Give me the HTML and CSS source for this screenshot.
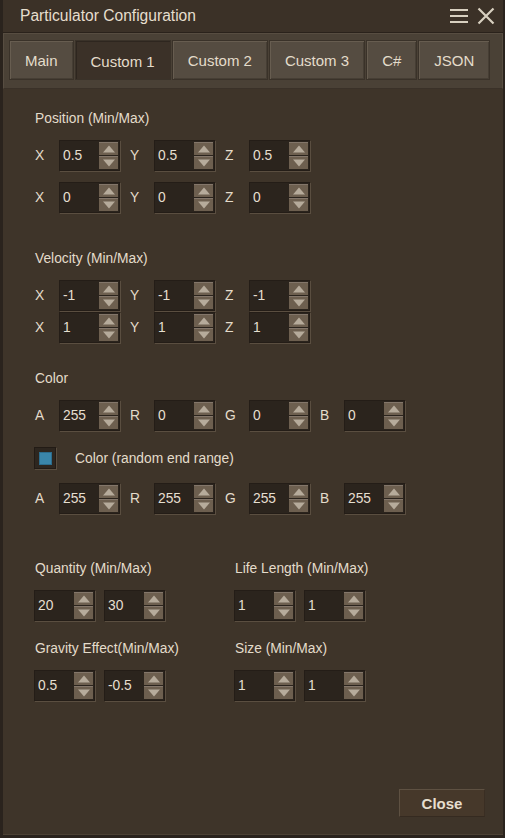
FILE: index.html
```html
<!DOCTYPE html>
<html>
<head>
<meta charset="utf-8">
<link rel="stylesheet" href="styles.css">
</head>
<body>
<div class="window">
  <div class="titlebar">
    <span class="title">Particulator Configuration</span>
    <div class="title-icons">
      <svg class="ico" width="20" height="18" viewBox="0 0 20 18"><path d="M1 3h18M1 9h18M1 15h18" stroke="#d8d0c0" stroke-width="2.2" fill="none"/></svg>
      <svg class="ico" width="18" height="18" viewBox="0 0 18 18"><path d="M1.5 1.5l15 15M16.5 1.5l-15 15" stroke="#d8d0c0" stroke-width="2.2" fill="none"/></svg>
    </div>
  </div>
  <div class="tabbar">
    <div class="tab">Main</div>
    <div class="tab active">Custom 1</div>
    <div class="tab">Custom 2</div>
    <div class="tab">Custom 3</div>
    <div class="tab">C#</div>
    <div class="tab">JSON</div>
  </div>
  <div class="content">
    <div class="sec-label">Position (Min/Max)</div>
    <div class="row">
      <span class="axis">X</span><div class="spin"><span class="val">0.5</span><div class="btns"><b class="up"></b><b class="dn"></b></div></div>
      <span class="axis">Y</span><div class="spin"><span class="val">0.5</span><div class="btns"><b class="up"></b><b class="dn"></b></div></div>
      <span class="axis">Z</span><div class="spin"><span class="val">0.5</span><div class="btns"><b class="up"></b><b class="dn"></b></div></div>
    </div>
    <div class="row gap12">
      <span class="axis">X</span><div class="spin"><span class="val">0</span><div class="btns"><b class="up"></b><b class="dn"></b></div></div>
      <span class="axis">Y</span><div class="spin"><span class="val">0</span><div class="btns"><b class="up"></b><b class="dn"></b></div></div>
      <span class="axis">Z</span><div class="spin"><span class="val">0</span><div class="btns"><b class="up"></b><b class="dn"></b></div></div>
    </div>

    <div class="sec-label mt39">Velocity (Min/Max)</div>
    <div class="row">
      <span class="axis">X</span><div class="spin"><span class="val">-1</span><div class="btns"><b class="up"></b><b class="dn"></b></div></div>
      <span class="axis">Y</span><div class="spin"><span class="val">-1</span><div class="btns"><b class="up"></b><b class="dn"></b></div></div>
      <span class="axis">Z</span><div class="spin"><span class="val">-1</span><div class="btns"><b class="up"></b><b class="dn"></b></div></div>
    </div>
    <div class="row gap2">
      <span class="axis">X</span><div class="spin"><span class="val">1</span><div class="btns"><b class="up"></b><b class="dn"></b></div></div>
      <span class="axis">Y</span><div class="spin"><span class="val">1</span><div class="btns"><b class="up"></b><b class="dn"></b></div></div>
      <span class="axis">Z</span><div class="spin"><span class="val">1</span><div class="btns"><b class="up"></b><b class="dn"></b></div></div>
    </div>

    <div class="sec-label mt29">Color</div>
    <div class="row">
      <span class="axis">A</span><div class="spin"><span class="val">255</span><div class="btns"><b class="up"></b><b class="dn"></b></div></div>
      <span class="axis">R</span><div class="spin"><span class="val">0</span><div class="btns"><b class="up"></b><b class="dn"></b></div></div>
      <span class="axis">G</span><div class="spin"><span class="val">0</span><div class="btns"><b class="up"></b><b class="dn"></b></div></div>
      <span class="axis">B</span><div class="spin"><span class="val">0</span><div class="btns"><b class="up"></b><b class="dn"></b></div></div>
    </div>
    <div class="check-row">
      <div class="checkbox"><div class="check-inner"></div></div>
      <span class="check-label">Color (random end range)</span>
    </div>
    <div class="row gap14">
      <span class="axis">A</span><div class="spin"><span class="val">255</span><div class="btns"><b class="up"></b><b class="dn"></b></div></div>
      <span class="axis">R</span><div class="spin"><span class="val">255</span><div class="btns"><b class="up"></b><b class="dn"></b></div></div>
      <span class="axis">G</span><div class="spin"><span class="val">255</span><div class="btns"><b class="up"></b><b class="dn"></b></div></div>
      <span class="axis">B</span><div class="spin"><span class="val">255</span><div class="btns"><b class="up"></b><b class="dn"></b></div></div>
    </div>

    <div class="grid2">
      <div class="cell">
        <div class="sec-label">Quantity (Min/Max)</div>
        <div class="pair">
          <div class="spin"><span class="val">20</span><div class="btns"><b class="up"></b><b class="dn"></b></div></div>
          <div class="spin"><span class="val">30</span><div class="btns"><b class="up"></b><b class="dn"></b></div></div>
        </div>
      </div>
      <div class="cell">
        <div class="sec-label">Life Length (Min/Max)</div>
        <div class="pair">
          <div class="spin"><span class="val">1</span><div class="btns"><b class="up"></b><b class="dn"></b></div></div>
          <div class="spin"><span class="val">1</span><div class="btns"><b class="up"></b><b class="dn"></b></div></div>
        </div>
      </div>
      <div class="cell">
        <div class="sec-label">Gravity Effect(Min/Max)</div>
        <div class="pair">
          <div class="spin"><span class="val">0.5</span><div class="btns"><b class="up"></b><b class="dn"></b></div></div>
          <div class="spin"><span class="val">-0.5</span><div class="btns"><b class="up"></b><b class="dn"></b></div></div>
        </div>
      </div>
      <div class="cell">
        <div class="sec-label">Size (Min/Max)</div>
        <div class="pair">
          <div class="spin"><span class="val">1</span><div class="btns"><b class="up"></b><b class="dn"></b></div></div>
          <div class="spin"><span class="val">1</span><div class="btns"><b class="up"></b><b class="dn"></b></div></div>
        </div>
      </div>
    </div>
  </div>
  <div class="footer">
    <button class="close-btn">Close</button>
  </div>
</div>
</body>
</html>
```

FILE: styles.css
```css
* { box-sizing: border-box; }
html, body { margin: 0; padding: 0; }
body {
  background: #2a231d;
  width: 505px;
  height: 838px;
  font-family: "Liberation Sans", Arial, sans-serif;
  color: #e4dccb;
  overflow: hidden;
}
.window {
  margin-left: 3px;
  width: 500px;
  height: 835px;
  background: #3e3429;
  display: flex;
  flex-direction: column;
  border-bottom: 1px solid #4c4134;
}
.titlebar {
  height: 33px;
  background: #3b3127;
  border-bottom: 1px solid #2a221b;
  display: flex;
  align-items: center;
  justify-content: space-between;
  padding: 0 8px 0 17px;
}
.title {
  font-size: 15.6px;
  color: #e6dece;
}
.title-icons {
  display: flex;
  align-items: center;
  gap: 8px;
}
.ico { display: block; }
.tabbar {
  height: 56px;
  background: #4a4136;
  border: 1px solid #574d41;
  border-bottom-color: #3a3128;
  display: flex;
  align-items: flex-start;
  gap: 1px;
  padding: 6px 0 0 5px;
}
.tab {
  flex-shrink: 0;
  white-space: nowrap;
  height: 40px;
  padding: 0 15px;
  display: flex;
  align-items: center;
  justify-content: center;
  font-size: 15px;
  color: #e4dccb;
  background: #554c41;
  border: 1px solid #3a3229;
  box-shadow: inset 1px 1px 0 #675d50, inset -1px -1px 0 #463e34;
}
.tab.active {
  background: #3b3128;
  box-shadow: inset 1px 1px 0 #2e261f;
  padding-top: 3px;
}
.content {
  flex: 1;
  padding: 22px 0 0 31px;
}
.sec-label {
  font-size: 13.8px;
  line-height: 16px;
  height: 16px;
  margin-bottom: 13px;
  padding-left: 1px;
  color: #e4dccb;
  white-space: nowrap;
}
.mt39 { margin-top: 39px; }
.mt29 { margin-top: 29px; }
.row {
  display: flex;
  align-items: center;
  height: 30px;
}
.gap12 { margin-top: 12px; }
.gap2 { margin-top: 2px; }
.gap14 { margin-top: 14px; }
.axis {
  width: 25px;
  padding-left: 1px;
  font-size: 13.8px;
  color: #e4dccb;
}
.row .spin { margin-right: 9px; }
.spin {
  width: 61px;
  height: 31px;
  display: flex;
  background: #2b241d;
  border: 1px solid #241d17;
  box-shadow: 1px 1px 0 #5a4e40;
  padding: 1px 1px 1px 0;
}
.val {
  flex: 1;
  font-size: 13.8px;
  color: #e6dfd0;
  padding-left: 3px;
  display: flex;
  align-items: center;
}
.btns {
  width: 19px;
  display: flex;
  flex-direction: column;
  gap: 1px;
}
.btns b {
  flex: 1;
  background: #6d5f4f;
  border-top: 1px solid #83766a;
  position: relative;
}
.btns b::after {
  content: "";
  position: absolute;
  left: 50%;
  top: 50%;
  width: 0;
  height: 0;
  border-left: 6px solid transparent;
  border-right: 6px solid transparent;
  transform: translate(-50%, -50%);
}
.btns .up::after { border-bottom: 7px solid #b6ab9b; }
.btns .dn::after { border-top: 7px solid #b6ab9b; }
.check-row {
  display: flex;
  align-items: center;
  margin-top: 17px;
  height: 22px;
}
.checkbox {
  width: 22px;
  height: 22px;
  background: #2d261f;
  border: 1px solid #221b15;
  box-shadow: 1px 1px 0 #5a4e40;
  display: flex;
  align-items: center;
  justify-content: center;
}
.check-inner {
  width: 13px;
  height: 13px;
  background: #3a86aa;
  border: 1px solid #2c6c8c;
}
.check-label {
  margin-left: 19px;
  font-size: 13.8px;
  color: #e4dccb;
}
.grid2 {
  margin-top: 48px;
  display: grid;
  grid-template-columns: 200px 200px;
  row-gap: 21px;
}
.pair {
  display: flex;
  gap: 9px;
  height: 30px;
}
.footer {
  display: flex;
  justify-content: flex-end;
  padding: 0 18px 17px 0;
}
.close-btn {
  width: 86px;
  height: 28px;
  background: #46382a;
  border: 1px solid #5e5142;
  border-bottom-color: #352a20;
  border-right-color: #3a2e23;
  font-family: "Liberation Sans", Arial, sans-serif;
  font-weight: bold;
  font-size: 15px;
  color: #e6dece;
  padding: 0;
}
```
